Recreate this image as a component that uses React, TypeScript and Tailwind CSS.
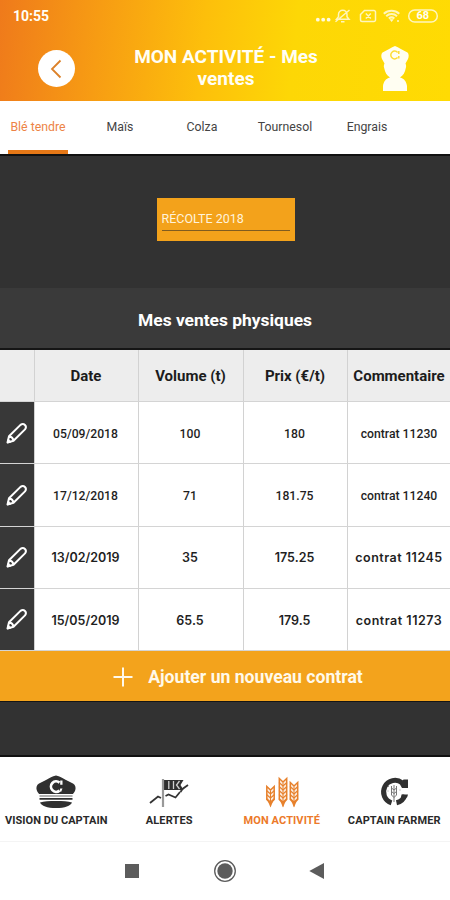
import React from 'react';

interface Sale {
    date: string;
    volume: string;
    price: string;
    comment: string;
    wide?: boolean;
}

const tabs = [
    { label: 'Blé tendre', className: 'w-[60px] ml-[8px]', active: true },
    { label: 'Maïs', className: 'w-[60px] ml-[22px]' },
    { label: 'Colza', className: 'w-[60px] ml-[22px]' },
    { label: 'Tournesol', className: 'w-[60px] ml-[23px]' },
    { label: 'Engrais', className: 'w-[60px] ml-[22px]' },
];

const sales: Sale[] = [
    { date: '05/09/2018', volume: '100', price: '180', comment: 'contrat 11230' },
    { date: '17/12/2018', volume: '71', price: '181.75', comment: 'contrat 11240' },
    { date: '13/02/2019', volume: '35', price: '175.25', comment: 'contrat 11245', wide: true },
    { date: '15/05/2019', volume: '65.5', price: '179.5', comment: 'contrat 11273', wide: true },
];

const columns = 'grid grid-cols-[34px_104px_105px_104px_103px]';

const StatusIcons = () => (
    <svg width="124" height="16" viewBox="0 0 124 16" fill="none" stroke="#fff6bd" strokeWidth="1.5">
        <g fill="#fffbe0" stroke="none">
            <circle cx="2.8" cy="11.7" r="1.9" />
            <circle cx="8.2" cy="11.7" r="1.9" />
            <circle cx="13.6" cy="11.7" r="1.9" />
        </g>
        {/* muted bell */}
        <path d="M21.5 11.3h12.5l-2-2.5V6.5a4 4 0 0 0-8.500 0v2.300zM26 13.800h3.500M20.500 13.800 34.500 2" />
        {/* missing sim */}
        <path d="M49.5 2.500H59a1.500 1.500 0 0 1 1.500 1.500v8a1.500 1.500 0 0 1-1.500 1.500H47A1.500 1.500 0 0 1 45.500 12V6.500zM50.800 5.500l5 5M55.800 5.500l-5 5" />
        {/* wifi */}
        <path d="M68.800 5.800a11.500 11.500 0 0 1 15.500 0M71.200 8.200a8 8 0 0 1 10.800 0M73.800 10.500a4.500 4.500 0 0 1 5.600 0" strokeWidth="2" />
        <path d="M74.500 11.300h4.200l-2.100 2.700z" fill="#fff8c8" stroke="none" />
        <circle cx="83" cy="13" r="1" fill="#fff8c8" stroke="none" />
        <rect x="93.700" y="2" width="28.600" height="12" rx="6" />
    </svg>
);

const Farmer = () => (
    <svg width="30" height="46" viewBox="0 0 30 46">
        <path d="M15 0c3.500 1 8 4.500 12.500 6.500C29 8 29 11 28 13l-2.500 4.500c.8 1.700.8 3.200.3 4.500-.7 4.500-2.600 7.500-5.800 9.500 4.500 1 6.500 4.500 7 8.500V45H3V40c.5-4 2.500-7.500 7-8.500C6.800 29.500 5 26.500 4.200 22c-.5-1.300-.5-2.800.3-4.500L2 13C1 11 1 8 2.500 6.500 7 4.500 11.500 1 15 0Z" fill="#fffef2" />
        <path d="M17.600 6.400a3.900 3.900 0 1 0 0 5.200M18.800 5v3M18.800 12.500V10" fill="none" stroke="#fddc35" strokeWidth="1.500" />
    </svg>
);

const Pen = () => (
    <svg width="22" height="22" viewBox="0 0 22 22" fill="none" stroke="white" strokeWidth="2" strokeLinejoin="round" strokeLinecap="round">
        <path d="M1.500 20.500 3 14.300 14.500 2.900c3.300-2.500 7 1.200 4.500 4.500L7.500 18.800zM3.500 14.300c2.200.5 3.500 1.800 4 4.200" />
        <path d="M1.500 20.500 2.300 17l2.500 2.700z" fill="white" strokeWidth="1" />
    </svg>
);

const Cap = () => (
    <svg width="40" height="34" viewBox="0 0 40 34">
        <path d="M20 .5c4 .5 6 2.500 10 4.500l7 3.500c2.500 1.500 3 4 2.300 6.500-.5 1.800-1.500 3-2.500 4H3.200C2.200 18 1.200 16.800.7 15 0 12.500.5 10 3 8.500L10 5c4-2 6-4 10-4.500Z" fill="#303030" />
        <path d="M3.500 21h33" stroke="#999" strokeWidth="1.400" />
        <path d="M3.500 23.800h33" stroke="#303030" strokeWidth="1.800" />
        <path d="M4 27.500c4-1.200 9-1.500 16-1.500s12 .3 16 1.500c-1.500 3.500-7 5.500-16 5.500S5.500 31 4 27.500Z" fill="#303030" />
        <path d="M23.500 7.600a5.200 5.200 0 1 0 0 8" fill="none" stroke="white" strokeWidth="2.700" />
        <path d="M24.200 5.500h2.300v4.300h-2.300zM24.200 13.500h2.300l-1.300 3.300-1.800-.3z" fill="white" />
    </svg>
);

const Flag = () => (
    <svg width="40" height="34" viewBox="0 0 40 34" fill="none">
        <path d="M15 5h19.500l-3 5 3 5H15z" fill="#303030" />
        <path d="M19.800 6v8M24.500 6v8M30.500 6l-3 4 3 4" stroke="#d0d0d0" strokeWidth="1.300" />
        <path d="M14 4v28" stroke="#999" strokeWidth="2.200" />
        <path d="M1 28 9 21.500l3 1.500M16.500 21l3-1.500 7 3 4.500-5.500M31.500 17l2-3 5.500-4" stroke="#333" strokeWidth="1.800" />
    </svg>
);

const Wheat = ({ x, top, rows }: { x: number; top: number; rows: number }) => (
    <g transform={`translate(${x} ${top})`} stroke="#e7812c" strokeWidth="1.1" fill="none">
        <path d={`M0 4v${rows * 4 + 4}`} strokeWidth="1" />
        <path d={`M-3.700 0v${rows * 4 + 1}l3.700 4 3.700-4V0L0 3.500z`} strokeWidth="1.5" fill="#e7812c" fillOpacity=".15" />
        {Array.from({ length: rows }, (_, i) => (
            <path key={i} d="M-4 4 0 7.500 4 4" transform={`translate(0 ${i * 4})`} />
        ))}
        <path d={`M-2.500 ${rows * 4 + 3}h5L0 ${rows * 4 + 9}z`} fill="#e7812c" stroke="none" />
    </g>
);

const WheatTrio = () => (
    <svg width="34" height="34" viewBox="0 0 34 34">
        <Wheat x={5.5} top={11.5} rows={3} />
        <Wheat x={18} top={3.5} rows={5} />
        <Wheat x={29} top={7.5} rows={4} />
    </svg>
);

const CaptainFarmer = () => (
    <svg width="30" height="34" viewBox="0 0 30 34" fill="none">
        <path d="M23 7.700A11.500 11.500 0 1 0 12.500 27.800" stroke="#303030" strokeWidth="5" />
        <path d="M17.500 27.800a11.500 11.500 0 0 0 8.500-7.800" stroke="#303030" strokeWidth="5" />
        <path d="M24.500 4.500H29V13h-6l-2-3.500zM22.500 19.500H29l-1 3h-6z" fill="#303030" />
        <path d="M15 10v17M12.500 11v9l2.500 2.500 2.500-2.500v-9M12.500 13l2.500 2 2.500-2M12.500 16.500l2.500 2 2.500-2" stroke="#777" strokeWidth="1" />
        <path d="M9.500 11v1M8.500 16h1M20.500 15h1" stroke="#999" strokeWidth="1" />
    </svg>
);

const navItems = [
    { label: 'VISION DU CAPTAIN', icon: <Cap />, text: 'text-[#292929] tracking-[0.03px]' },
    { label: 'ALERTES', icon: <Flag />, text: 'text-[#292929] tracking-[0.15px] pl-px' },
    { label: 'MON ACTIVITÉ', icon: <WheatTrio />, text: 'text-[#ec7a2a] tracking-[0.1px] pl-px' },
    { label: 'CAPTAIN FARMER', icon: <CaptainFarmer />, text: 'text-[#292929] tracking-[0.1px] pl-px' },
];

export default function App() {
    return (
        <div className="w-[450px] h-[900px] flex flex-col overflow-hidden bg-[#323232] font-[Roboto,sans-serif]">
            {/* Header */}
            <header className="h-[101px] shrink-0 bg-[linear-gradient(96deg,#ef7a1b_0%,#f79c13_22%,#fdbf0b_45%,#fdd706_65%,#ffdb03_100%)] text-[#fffef5]">
                <div className="h-8 pl-[13px] pr-[11px] flex items-center justify-between">
                    <span className="text-[14px] font-bold pt-px">10:55</span>
                    <div className="relative">
                        <StatusIcons />
                        <span className="absolute right-[10px] top-[2px] text-[11px] leading-[12px] font-bold">68</span>
                    </div>
                </div>
                <div className="h-[69px] flex">
                    <div className="w-[113px] pl-[38px] pt-[18px]">
                        <button className="size-[37px] rounded-full bg-white flex items-center justify-center">
                            <svg width="14" height="20" viewBox="0 0 14 20" fill="none" stroke="#dc8129" strokeWidth="1.8">
                                <path d="M10.500 1.500 2 10l8.500 8.500" />
                            </svg>
                        </button>
                    </div>
                    <h1 className="w-[226px] pt-[14px] text-center text-[19px] leading-[21.5px] font-bold">
                        MON ACTIVITÉ - Mes
                        <br />
                        ventes
                    </h1>
                    <div className="pl-[41px] pt-[14px]">
                        <Farmer />
                    </div>
                </div>
            </header>

            {/* Tabs */}
            <nav className="h-[55px] shrink-0 flex bg-white border-b-2 border-[#111]">
                {tabs.map((tab) => (
                    <div
                        key={tab.label}
                        className={`${tab.className} pt-[4px] flex items-center justify-center border-b-4 text-[12.3px] whitespace-nowrap ${tab.active ? 'border-[#e67817] text-[#ed8345]' : 'border-transparent text-[#444]'}`}
                    >
                        {tab.label}
                    </div>
                ))}
            </nav>

            {/* Harvest picker */}
            <div className="h-[132px] shrink-0 flex justify-center pt-[42px] pl-px">
                <div className="w-[138px] h-[43px] px-[5px] pt-[12px] bg-[#f3a21b]">
                    <div className="h-[21px] border-b border-[#805c20] text-[12.5px] leading-[18px] text-[#fff3db]">RÉCOLTE 2018</div>
                </div>
            </div>

            {/* Sales table */}
            <h2 className="h-[62px] shrink-0 pt-[5px] flex items-center justify-center bg-[#3a3a3a] border-b-2 border-[#151515] text-white text-[17.4px] font-bold">
                Mes ventes physiques
            </h2>
            <div className={`${columns} h-[52px] shrink-0 bg-[#ededed] border-b border-[#d4d4d4] text-[15px] font-bold text-[#1c1c1c]`}>
                {['', 'Date', 'Volume (t)', 'Prix (€/t)', 'Commentaire'].map((title, i) => (
                    <div key={i} className={`flex items-center justify-center pt-[2px] ${i ? 'border-l border-[#d2d2d2]' : ''} ${i < 4 ? 'pr-px' : ''}`}>
                        {title}
                    </div>
                ))}
            </div>
            <div className="h-[249px] shrink-0 grid grid-rows-4 bg-white">
                {sales.map((sale) => (
                    <div
                        key={sale.date}
                        className={`${columns} border-b border-[#d4d4d4] text-[#1f1f1f] ${sale.wide ? 'font-[Inter,sans-serif] text-[12.5px] font-semibold' : 'text-[12.2px] font-medium'}`}
                    >
                        <div className="bg-[#383838] flex items-center justify-center">
                            <Pen />
                        </div>
                        {[sale.date, sale.volume, sale.price, sale.comment].map((value, i) => (
                            <div
                                key={i}
                                className={`flex items-center justify-center pt-[3px] border-l border-[#d2d2d2] whitespace-nowrap ${i < 3 ? 'pr-[2px]' : ''} ${i === 3 && sale.wide ? 'tracking-[0.5px]' : ''}`}
                            >
                                {value}
                            </div>
                        ))}
                    </div>
                ))}
            </div>
            <button className="h-[51px] shrink-0 pt-[3px] pl-[26px] flex items-center justify-center gap-[15px] bg-[#f3a31c] border-b border-[#151515] text-[#fff9ea] text-[17.6px] font-bold">
                <svg className="-mt-[2px]" width="20" height="20" viewBox="0 0 20 20" stroke="#fff9ea" strokeWidth="2">
                    <path d="M10 .5v19M.5 10h19" />
                </svg>
                Ajouter un nouveau contrat
            </button>

            {/* Bottom navigation */}
            <nav className="mt-[53px] h-[86px] shrink-0 grid grid-cols-4 bg-white border-t-2 border-[#111]">
                {navItems.map((item) => (
                    <div key={item.label} className={`flex flex-col items-center pt-[18px] text-[11px] font-bold whitespace-nowrap ${item.text}`}>
                        {item.icon}
                        <span className="mt-[5px] leading-[14px]">{item.label}</span>
                    </div>
                ))}
            </nav>
            <div className="flex-1 flex justify-center bg-white border-t border-[#f4f4f4]">
                <svg width="204" height="58" viewBox="0 0 204 58" fill="#5c5c5c">
                    <rect x="2" y="22" width="14" height="14" />
                    <circle cx="102" cy="29" r="10.3" fill="none" stroke="#5c5c5c" strokeWidth="1.3" />
                    <circle cx="102" cy="29" r="7.7" />
                    <path d="M186.300 29 201 21v16z" />
                </svg>
            </div>
        </div>
    );
}
